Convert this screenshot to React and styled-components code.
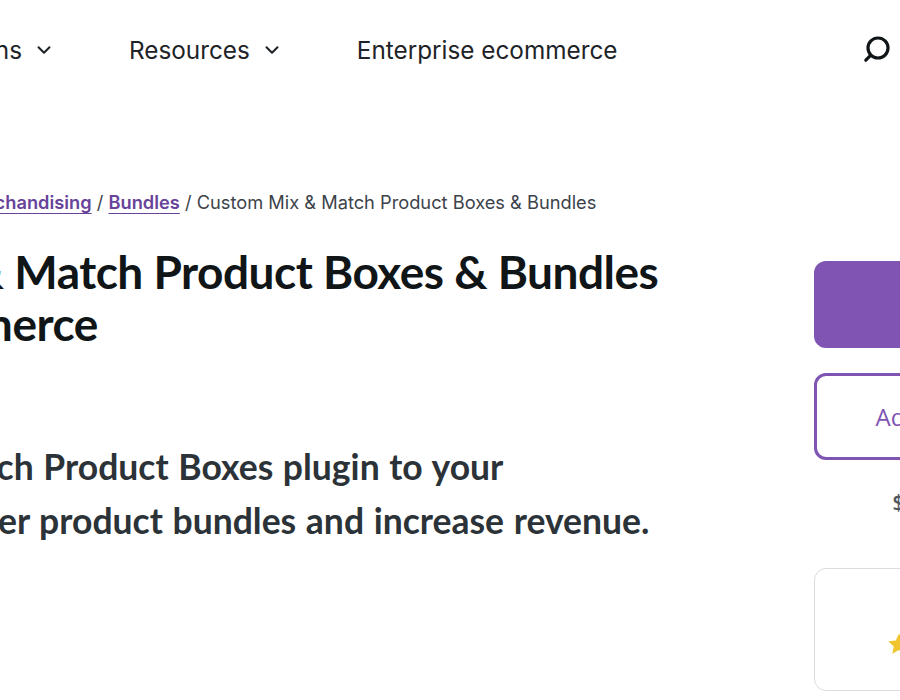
import React from 'react'
import styled, { createGlobalStyle } from 'styled-components'
import { ChevronDown } from 'lucide-react'

const Global = createGlobalStyle`
  html, body {
    margin: 0;
    height: 700px;
    overflow: hidden;
    background: #fff;
  }
`

const Page = styled.div`
  width: 1472px;
  margin-left: -286px;
`

const Header = styled.header`
  display: flex;
  align-items: center;
  height: 100px;
  width: 1186px;
  color: #1d2327;
  font-family: Inter, sans-serif;
  font-size: 24.3px;
`

const Nav = styled.nav`
  display: flex;
  align-items: center;
  gap: 74px;
  margin-left: 202px;
`

const NavItem = styled.a`
  display: flex;
  align-items: center;
  gap: 11px;
  white-space: nowrap;
`

const SearchButton = styled.button`
  display: flex;
  margin-left: auto;
  margin-right: 8px;
  padding: 0;
  border: 0;
  background: none;
  color: #101517;
`

const Main = styled.main`
  display: grid;
  grid-template-columns: 1100px 286px;
  padding-top: 87px;
`

const Crumbs = styled.div`
  padding-left: 2px;
  font-family: Inter, sans-serif;
  font-size: 18.25px;
  line-height: 30px;
  color: #3c434a;
  white-space: nowrap;
`

const CrumbLink = styled.a`
  color: #674399;
  font-weight: 600;
  text-decoration: underline;
  text-underline-offset: 4px;
`

const Title = styled.h1`
  margin: 29px 0 0;
  padding-left: 3px;
  font-family: Lato, sans-serif;
  font-size: 46px;
  line-height: 52px;
  font-weight: 700;
  letter-spacing: -0.5px;
  color: #101517;
`

const Lead = styled.p`
  margin: 90px 0 0;
  font-family: Lato, sans-serif;
  font-size: 35.5px;
  line-height: 54px;
  font-weight: 700;
  word-spacing: 1px;
  color: #2c3338;
`

const Side = styled.aside`
  display: flex;
  flex-direction: column;
  padding-top: 74px;
  font-family: "Open Sans", sans-serif;
`

const Button = styled.a`
  display: flex;
  align-items: center;
  justify-content: center;
  box-sizing: border-box;
  height: 87px;
  border-radius: 12px;
  border: 3px solid #7f54b3;
  font-size: 24px;
  background: ${({ $filled }) => ($filled ? '#7f54b3' : '#fff')};
  color: ${({ $filled }) => ($filled ? '#fff' : '#7f54b3')};
  margin-bottom: 25px;
`

const Price = styled.div`
  margin-top: 2px;
  text-align: center;
  font-size: 21px;
  font-weight: 600;
  line-height: 30px;
  color: #50575e;
`

const RatingCard = styled.div`
  box-sizing: border-box;
  height: 123px;
  margin-top: 51px;
  padding-top: 63px;
  border: 1px solid #dcdcde;
  border-radius: 12px;
`

const Stars = styled.div`
  display: flex;
  justify-content: center;
  gap: 5px;
`

const Star = () => (
  <svg width="24" height="24" viewBox="0 0 24 24" fill="#f0c52e">
    <path d="M12 1.5l3.2 6.9 7.5.9-5.5 5.1 1.5 7.4L12 18.1l-6.7 3.7 1.5-7.4L1.3 9.3l7.5-.9z" />
  </svg>
)

export default function App() {
  return (
    <Page>
      <Global />
      <Header>
        <Nav>
          <NavItem>
            Solutions
            <ChevronDown size={22} strokeWidth={2.2} />
          </NavItem>
          <NavItem>
            Resources
            <ChevronDown size={22} strokeWidth={2.2} />
          </NavItem>
          <NavItem>Enterprise ecommerce</NavItem>
        </Nav>
        <SearchButton aria-label="Search">
          <svg width="32" height="32" viewBox="0 0 32 32" fill="none" stroke="currentColor" strokeWidth="3.2" strokeLinecap="round">
            <circle cx="18" cy="14" r="10" />
            <path d="M10.6 21.4L5.8 26.2" />
          </svg>
        </SearchButton>
      </Header>
      <Main>
        <div>
          <Crumbs>
            WooCommerce / Products / <CrumbLink>Merchandising</CrumbLink> / <CrumbLink>Bundles</CrumbLink> / Custom Mix &amp; Match Product Boxes &amp; Bundles
          </Crumbs>
          <Title>
            Custom Mix &amp; Match Product Boxes &amp; Bundles
            <br />
            for WooCommerce
          </Title>
          <Lead>
            Add in Mix &amp; Match Product Boxes plugin to your
            <br />
            online store to offer product bundles and increase revenue.
          </Lead>
        </div>
        <Side>
          <Button $filled>Buy now</Button>
          <Button>Add to wishlist</Button>
          <Price>$79 annually</Price>
          <RatingCard>
            <Stars>
              <Star />
              <Star />
              <Star />
              <Star />
              <Star />
            </Stars>
          </RatingCard>
        </Side>
      </Main>
    </Page>
  )
}
